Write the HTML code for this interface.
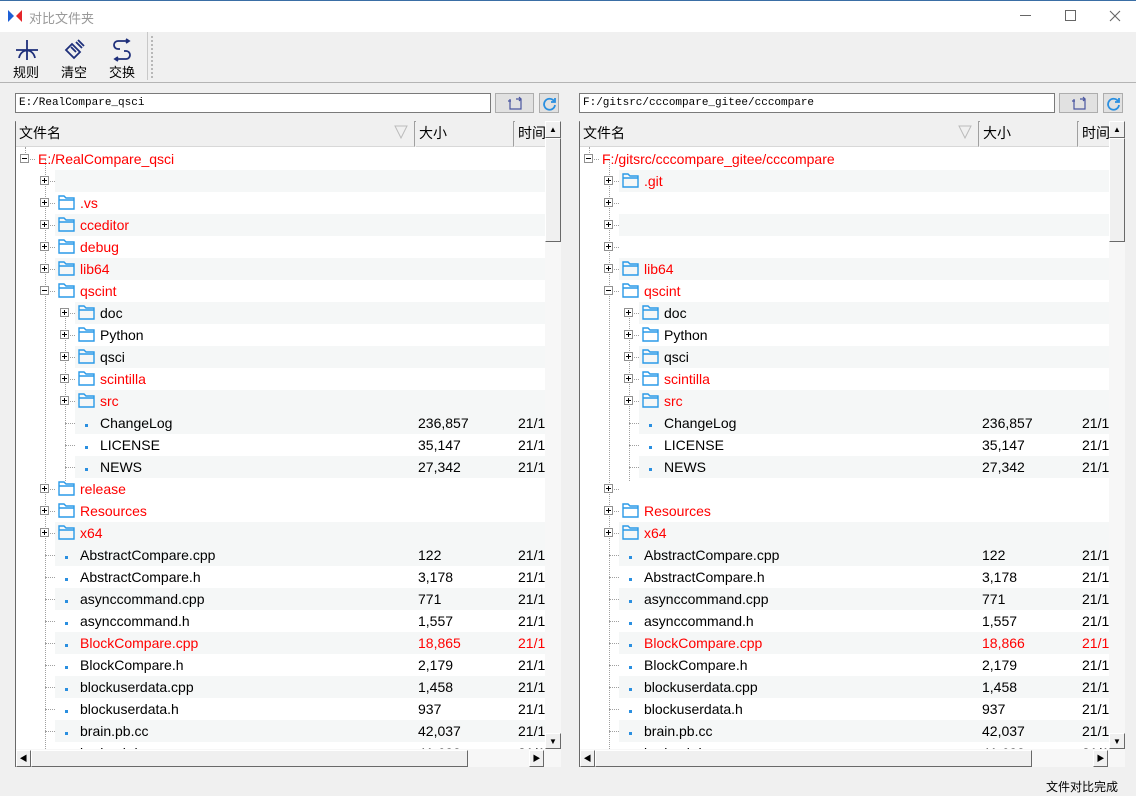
<!DOCTYPE html>
<html><head><meta charset="utf-8"><style>
*{box-sizing:border-box;margin:0;padding:0}
body{width:1136px;height:796px;background:#f0f0f0;position:relative;overflow:hidden;font-family:"Liberation Sans","Noto Sans CJK SC",sans-serif;font-size:14px;color:#000}
.a{position:absolute}
.title{left:0;top:0;width:1136px;height:32px;background:#fff;border-top:1px solid #3a6ea5}
.tb{font-size:13px;text-align:center;width:40px}
.input{height:20px;background:#fff;border:1px solid #7a7a7a;font-family:"Liberation Mono",monospace;font-size:11px;line-height:18px;padding-left:3px}
.btn{background:#e1e1e1;border:1px solid #adadad}
.hdr{top:121px;height:26px;background:#f0f0f0;border-bottom:1px solid #d8d8d8;line-height:25px;font-size:14px}
.tree{top:147px;height:602px;background:#fff;overflow:hidden}
.row{position:absolute;height:22px;line-height:22px;white-space:nowrap}
.red{color:#f00}
.exp{position:absolute;width:9px;height:9px;border:1px solid #919191;background:#fff}
.exp:before{content:"";position:absolute;left:1px;top:3px;width:5px;height:1px;background:#000}
.exp.p:after{content:"";position:absolute;left:3px;top:1px;width:1px;height:5px;background:#000}
.dot{position:absolute;width:3px;height:3px;background:#2a8fe0}
.vl{position:absolute;border-left:1px dotted #a0a0a0;width:0}
.hl{position:absolute;border-top:1px dotted #a0a0a0;height:0}
.sb{background:#f0f0f0;border:1px solid #fff;border-right-color:#696969;border-bottom-color:#696969}
</style></head><body>
<div class="a title">
 <svg class="a" style="left:8px;top:9px" width="14" height="12"><polygon points="0,0 6,6 0,12" fill="#1d5fd6"/><polygon points="14,0 8,6 14,12" fill="#e5252a"/></svg>
 <div class="a" style="left:29px;top:7px;font-size:13px;color:#999">对比文件夹</div>
 <div class="a" style="left:1020px;top:14px;width:11px;height:1px;background:#666"></div>
 <div class="a" style="left:1065px;top:9px;width:11px;height:11px;border:1px solid #666"></div>
 <svg class="a" style="left:1109px;top:9px" width="12" height="12" stroke="#666" stroke-width="1.1"><path d="M1 1l10 10M11 1L1 11"/></svg>
</div>
<svg class="a" style="left:15px;top:38px" width="24" height="24" fill="none" stroke="#1e2f7a" stroke-width="1.8"><path d="M12 2v20M1 12h22M4 20c2-10 14-10 16 0"/></svg>
<div class="a tb" style="left:6px;top:62px">规则</div>
<svg class="a" style="left:62px;top:38px" width="24" height="24" fill="none" stroke="#1e2f7a" stroke-width="1.8"><path d="M4 12l6-6 8 8-6 6zM14 4l6 6M9 9l5 5M16 2l6 6"/></svg>
<div class="a tb" style="left:54px;top:62px">清空</div>
<svg class="a" style="left:110px;top:38px" width="24" height="24" fill="none" stroke="#1e2f7a" stroke-width="1.8"><path d="M18 3h-10a4 4 0 0 0 0 8h2M16 1l3 2-3 2M6 21h10a4 4 0 0 0 0-8h-2M8 19l-3 2 3 2"/></svg>
<div class="a tb" style="left:102px;top:62px">交换</div>
<div class="a" style="left:147px;top:32px;width:1px;height:48px;background:#c8c8c8"></div>
<div class="a" style="left:151px;top:36px;width:2px;height:42px;border-left:2px dotted #b8b8b8"></div>
<div class="a" style="left:0;top:82px;width:1136px;height:1px;background:#b4b4b4"></div>
<div id="panels"></div>
<div class="a" style="left:1046px;top:778px;font-size:12px">文件对比完成</div>
<script>
const G=new Set([1,3,5,7,9,11,12,14,17,18,20,22,24,26]);
function mk(x0,path,rows){
 let h='';
 h+=`<div class="a input" style="left:${x0}px;top:93px;width:476px">${path}</div>`;
 h+=`<div class="a btn" style="left:${x0+480}px;top:93px;width:39px;height:20px"><svg class="a" style="left:11px;top:2px" width="16" height="14" fill="none" stroke="#4a56a0" stroke-width="1.2"><path d="M3 3v10h11V3h-5M1 5h3M12 1l2 2-2 2"/></svg></div>`;
 h+=`<div class="a btn" style="left:${x0+524}px;top:93px;width:20px;height:20px"><svg class="a" style="left:2px;top:2px" width="15" height="15" fill="none" stroke="#2a8fe0" stroke-width="1.8"><path d="M12 5a5.5 5.5 0 1 0 1 4M13 2v4h-4"/></svg></div>`;
 h+=`<div class="a" style="left:${x0}px;top:121px;width:546px;height:646px;border-left:1px solid #696969;border-top:1px solid #a0a0a0"></div>`;
 h+=`<div class="a hdr" style="left:${x0+1}px;width:399px;border-right:1px solid #a0a0a0;padding-left:3px">文件名<svg class="a" style="left:378px;top:4px" width="14" height="14" fill="none" stroke="#bbb"><path d="M1 1h12L7 13z"/></svg></div>`;
 h+=`<div class="a hdr" style="left:${x0+401}px;width:98px;border-right:1px solid #a0a0a0;padding-left:3px">大小</div>`;
 h+=`<div class="a hdr" style="left:${x0+500}px;width:30px;padding-left:3px;overflow:hidden;white-space:nowrap">时间</div>`;
 h+=`<div class="a tree" style="left:${x0+1}px;width:529px">`;
 h+=`<div class="vl" style="left:9px;top:0;height:12px"></div>`;
 h+=`<div class="vl" style="left:29px;top:12px;height:600px"></div>`;
 h+=`<div class="vl" style="left:49px;top:166px;height:168px"></div>`;
 rows.forEach((r,i)=>{
  const cy=159+22*i-147, top=cy-11;
  const lv=r[0],t=r[1],nm=r[2]||'',sz=r[3]||'',red=r[4];
  const ex=lv==0?9:lv==1?29:49;
  if(G.has(i)){const gx=lv==2?59:39;h+=`<div class="a" style="left:${gx}px;top:${top}px;width:600px;height:22px;background:#f5f7f7"></div>`;}
  h+=`<div class="hl" style="left:${ex}px;top:${cy}px;width:10px"></div>`;
  if(t=='+'||t=='-'||t=='f+'||t=='f-'){const m=t.endsWith('-')?'':'p';h+=`<div class="exp ${m}" style="left:${ex-5}px;top:${cy-5}px"></div>`;}
  const ix=lv==1?42:62;
  if(t.startsWith('f')) h+=`<svg class="a" style="left:${ix}px;top:${cy-8}px" width="17" height="15" fill="none" stroke="#2a9ae8" stroke-width="1.4"><path d="M1 1h5l2 2h8v11H1zM1 5h15"/></svg>`;
  if(t=='d') h+=`<div class="dot" style="left:${lv==1?49:69}px;top:${cy+1}px"></div>`;
  const tx=lv==0?22:lv==1?64:84;
  h+=`<div class="row${red?' red':''}" style="left:${tx}px;top:${top}px">${nm}</div>`;
  if(sz){h+=`<div class="row${red?' red':''}" style="left:402px;top:${top}px">${sz}</div><div class="row${red?' red':''}" style="left:502px;top:${top}px">21/1</div>`;}
 });
 h+=`</div>`;
 h+=`<div class="a" style="left:${x0+530}px;top:121px;width:16px;height:628px;background:#f7f7f7"></div>`;
 h+=`<div class="a sb" style="left:${x0+530}px;top:121px;width:16px;height:17px;text-align:center;font-size:8px;line-height:15px">▲</div>`;
 h+=`<div class="a sb" style="left:${x0+530}px;top:138px;width:16px;height:104px"></div>`;
 h+=`<div class="a sb" style="left:${x0+530}px;top:733px;width:16px;height:16px;text-align:center;font-size:8px;line-height:15px">▼</div>`;
 h+=`<div class="a" style="left:${x0+1}px;top:749px;width:545px;height:18px;background:#f7f7f7"></div>`;
 h+=`<div class="a sb" style="left:${x0+1}px;top:750px;width:15px;height:17px;font-size:8px;line-height:15px;text-align:center">◀</div>`;
 h+=`<div class="a sb" style="left:${x0+16}px;top:750px;width:437px;height:17px"></div>`;
 h+=`<div class="a sb" style="left:${x0+514}px;top:750px;width:15px;height:17px;font-size:8px;line-height:15px;text-align:center">▶</div>`;
 return h;
}
const common=[[2,'f+','doc'],[2,'f+','Python'],[2,'f+','qsci'],[2,'f+','scintilla',0,1],[2,'f+','src',0,1],
[2,'d','ChangeLog','236,857'],[2,'d','LICENSE','35,147'],[2,'d','NEWS','27,342']];
const files=[['AbstractCompare.cpp','122'],['AbstractCompare.h','3,178'],['asynccommand.cpp','771'],['asynccommand.h','1,557'],['BlockCompare.cpp','18,865',1],['BlockCompare.h','2,179'],['blockuserdata.cpp','1,458'],['blockuserdata.h','937'],['brain.pb.cc','42,037'],['brain.pb.h','41,600']];
const fl=(alt)=>files.map(f=>[1,'d',f[0],(alt&&f[2])?'18,866':f[1],f[2]]);
const L=[[0,'-','E:/RealCompare_qsci',0,1],[1,'+'],[1,'f+','.vs',0,1],[1,'f+','cceditor',0,1],[1,'f+','debug',0,1],[1,'f+','lib64',0,1],[1,'f-','qscint',0,1],...common,[1,'f+','release',0,1],[1,'f+','Resources',0,1],[1,'f+','x64',0,1],...fl(0)];
const R=[[0,'-','F:/gitsrc/cccompare_gitee/cccompare',0,1],[1,'f+','.git',0,1],[1,'+'],[1,'+'],[1,'+'],[1,'f+','lib64',0,1],[1,'f-','qscint',0,1],...common,[1,'+'],[1,'f+','Resources',0,1],[1,'f+','x64',0,1],...fl(1)];
document.getElementById('panels').innerHTML=mk(15,'E:/RealCompare_qsci',L)+mk(579,'F:/gitsrc/cccompare_gitee/cccompare',R);
</script>
</body></html>
